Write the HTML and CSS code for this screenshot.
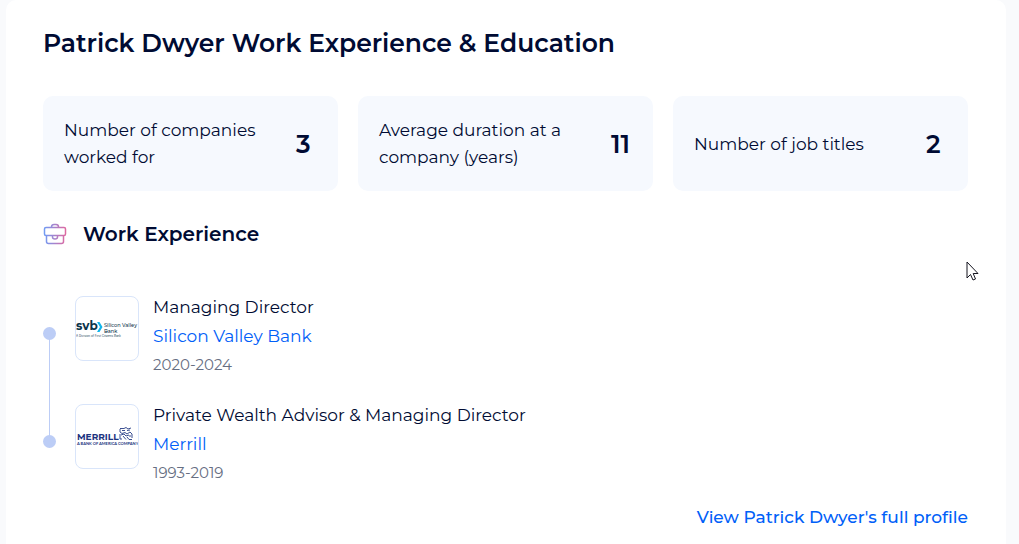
FILE: index.html
```html
<!DOCTYPE html>
<html lang="en">
<head>
    <meta charset="UTF-8">
    <meta name="viewport" content="width=device-width, initial-scale=1.0">
    <title>Patrick Dwyer Work Experience &amp; Education</title>
    <link rel="stylesheet" href="styles.css">
</head>
<body>
    <main class="card">
        <h1 class="card-title">Patrick Dwyer Work Experience &amp; Education</h1>

        <!-- Summary numbers -->
        <div class="stats">
            <div class="stat">
                <span class="stat-label">Number of companies worked for</span>
                <span class="stat-value">3</span>
            </div>
            <div class="stat">
                <span class="stat-label">Average duration at a company (years)</span>
                <span class="stat-value">11</span>
            </div>
            <div class="stat">
                <span class="stat-label">Number of job titles</span>
                <span class="stat-value">2</span>
            </div>
        </div>

        <!-- Work Experience -->
        <h2 class="section-title">
            <svg class="section-icon" width="24" height="22" viewBox="0 0 24 22" fill="none" aria-hidden="true">
                <defs>
                    <linearGradient id="briefcase" gradientUnits="userSpaceOnUse" x1="1" y1="0" x2="23" y2="0">
                        <stop offset="0" stop-color="#6f9cf5"/>
                        <stop offset="1" stop-color="#e0689f"/>
                    </linearGradient>
                </defs>
                <g stroke="url(#briefcase)" stroke-width="1.5" stroke-linejoin="round">
                    <path d="M8.5 4.5V4C8.5 2.3 9.5 1.5 11 1.5H13C14.5 1.5 15.5 2.3 15.5 4V4.5"/>
                    <rect x="1.5" y="4.5" width="21" height="8" rx="1.5"/>
                    <path d="M3.5 12.5V18.5C3.5 19.8 4.2 20.5 5.5 20.5H18.5C19.8 20.5 20.5 19.8 20.5 18.5V12.5"/>
                    <path d="M9.5 12.5V14C9.5 15.3 10.3 16 12 16S14.5 15.3 14.5 14V12.5"/>
                </g>
            </svg>
            Work Experience
        </h2>

        <ul class="timeline">
            <li class="job">
                <div class="logo">
                    <svg width="62" height="63" viewBox="0 0 62 63" role="img" aria-label="Silicon Valley Bank logo">
                        <text class="svb-mark" x="0" y="33">svb</text>
                        <path d="M21 25H23.5L26.5 30L23.5 35H21L24 30Z" fill="#12b5ea"/>
                        <text class="svb-name" x="28" y="30">Silicon Valley</text>
                        <text class="svb-name" x="28" y="36">Bank</text>
                        <text class="svb-note" x="0" y="40">A Division of First Citizens Bank</text>
                    </svg>
                </div>
                <div class="job-text">
                    <h3 class="job-title">Managing Director</h3>
                    <a class="company" href="#">Silicon Valley Bank</a>
                    <p class="years">2020-2024</p>
                </div>
            </li>
            <li class="job">
                <div class="logo">
                    <svg width="62" height="63" viewBox="0 0 62 63" role="img" aria-label="Merrill logo">
                        <text class="merrill-name" x="1" y="35">MERRILL</text>
                        <g fill="none" stroke="#3b4f91" stroke-width="1">
                            <path d="M44 23.5H48L50 22.5L52 24L55 23M44 24V27L46 28.500L49 27.500L51 29L54 27L56 29V33"/>
                            <path d="M45 30L48 29L50 31L53 30M46 25.500H49M51 25.500L54 25M44 29V34H46M47 31L50 34.500M51 32L53 34.500H56M54 30V32"/>
                        </g>
                        <text class="merrill-note" x="1" y="40">A BANK OF AMERICA COMPANY</text>
                    </svg>
                </div>
                <div class="job-text">
                    <h3 class="job-title">Private Wealth Advisor &amp; Managing Director</h3>
                    <a class="company" href="#">Merrill</a>
                    <p class="years">1993-2019</p>
                </div>
            </li>
        </ul>

        <a class="profile-link" href="#">View Patrick Dwyer's full profile</a>
    </main>

    <!-- Mouse pointer -->
    <svg class="pointer" width="13" height="20" viewBox="0 0 13 20" aria-hidden="true">
        <path d="M1 1V17L4.5 13.5L7 19L9.5 18L7.2 12.5H12Z" fill="#fff" stroke="#15151f"/>
    </svg>
</body>
</html>
```

FILE: styles.css
```css
* {
    box-sizing: border-box;
}

body {
    margin: 0;
    background-color: #f9fafc;
    color: #000b33;
    font-family: Montserrat, Inter, sans-serif;
    font-size: 17px;
}

.card {
    display: flex;
    flex-direction: column;
    margin: 0 13px 0 6px;
    padding: 27px 38px 12px 37px;
    background-color: #fff;
    border-radius: 10px 10px 0 0;
}

.card-title {
    margin: 0 0 37px;
    font-size: 25px;
    font-weight: 600;
    line-height: 32px;
}

.stats {
    display: grid;
    grid-template-columns: repeat(3, 1fr);
    gap: 20px;
}

.stat {
    display: flex;
    align-items: center;
    justify-content: space-between;
    gap: 16px;
    padding: 21px 20px 20px 21px;
    background-color: #f6f9fe;
    border-radius: 10px;
}

.stat-label {
    max-width: 206px;
    line-height: 27px;
}

.stat-value {
    width: 22px;
    font-size: 25px;
    font-weight: 600;
    line-height: 32px;
}

.section-title {
    display: flex;
    align-items: center;
    gap: 16px;
    margin: 28px 0 47px;
    font-size: 20px;
    font-weight: 600;
    line-height: 30px;
}

.timeline {
    margin: 0;
    padding: 0;
    list-style: none;
}

.job {
    display: flex;
    gap: 14px;
    position: relative;
    padding: 0 0 24px 32px;
}

.job:last-child {
    padding-bottom: 14px;
}

/* Dot and the line that joins it to the next one */
.job::before {
    content: "";
    position: absolute;
    top: 31px;
    left: 0;
    width: 13px;
    height: 13px;
    background-color: #bccdf6;
    border-radius: 50%;
}

.job:not(:last-child)::after {
    content: "";
    position: absolute;
    top: 38px;
    left: 6px;
    width: 1px;
    height: 100%;
    background-color: #bccdf6;
}

.logo {
    flex: none;
    width: 64px;
    height: 65px;
    border: 1px solid #d9e5fa;
    border-radius: 8px;
    overflow: hidden;
}

.logo svg {
    display: block;
}

.svb-mark {
    fill: #0b3349;
    font-size: 12px;
    font-weight: 700;
}

.svb-name {
    fill: #0b3349;
    font-size: 5px;
    font-weight: 500;
}

.svb-note {
    fill: #26495c;
    font-family: Inter, sans-serif;
    font-size: 3px;
}

.merrill-name {
    fill: #1d3480;
    font-size: 9px;
    font-weight: 700;
}

.merrill-note {
    fill: #1d3480;
    font-family: Lato, sans-serif;
    font-size: 4px;
    font-weight: 700;
}

.job-text {
    display: flex;
    flex-direction: column;
    align-items: flex-start;
    margin-top: -4px;
}

.job-title {
    margin: 0;
    font-size: 17px;
    font-weight: 400;
    line-height: 30px;
}

.company {
    color: #0060f8;
    line-height: 28px;
    text-decoration: none;
}

.years {
    margin: 0;
    color: #666e82;
    font-size: 15px;
    line-height: 30px;
}

.profile-link {
    align-self: flex-end;
    color: #0060f8;
    font-weight: 500;
    line-height: 30px;
    text-decoration: none;
}

.company:hover,
.profile-link:hover {
    text-decoration: underline;
}

.pointer {
    position: absolute;
    top: 261px;
    left: 966px;
}
```
